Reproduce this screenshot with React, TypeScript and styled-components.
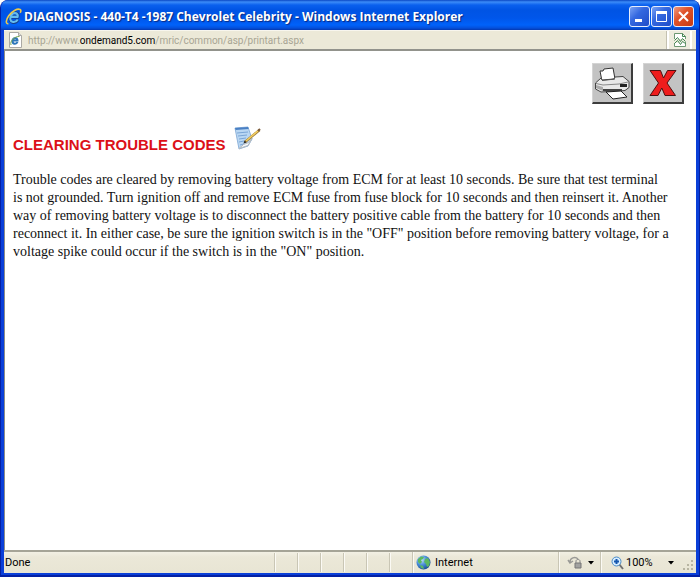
import React from "react";
import styled, { createGlobalStyle, css } from "styled-components";

const Global = createGlobalStyle`
  * { box-sizing: border-box; }
  body { margin: 0; background: #fff; }
  button { font: inherit; padding: 0; cursor: pointer; }
`;

const Window = styled.div`
  min-height: 100vh;
  display: flex;
  flex-direction: column;
  background: #0a3fd8;
  border: solid #0420a4;
  border-width: 0 1px 2px;
  border-radius: 8px 8px 0 0;
  overflow: hidden;
`;

const TitleBar = styled.header`
  height: 30px;
  display: flex;
  align-items: center;
  gap: 2px;
  padding: 3px 5px 0 4px;
  background: linear-gradient(
    #0a47c4 0,
    #3c8cf8 2px,
    #0a60ee 5px,
    #0054e4 10px,
    #0056ea 18px,
    #0062fa 25px,
    #0450dc 28px,
    #0438b0 30px
  );
`;

const Title = styled.h1`
  flex: 1;
  margin: 0;
  font: 700 12px/20px "Open Sans", sans-serif;
  color: #fff;
  text-shadow: 1px 1px 1px #0a2a80;
  white-space: nowrap;
`;

const Controls = styled.div`
  display: flex;
  gap: 1px;
`;

const ControlButton = styled.button<{ $close?: boolean }>`
  width: 21px;
  height: 21px;
  border: 1px solid #e6edfc;
  border-radius: 3px;
  display: grid;
  place-items: center;
  background: ${(p) =>
    p.$close
      ? "linear-gradient(135deg, #ee9a80, #e0532b 40%, #c63a12)"
      : "linear-gradient(135deg, #7aa2f4, #3468e0 40%, #1f4cc8)"};
`;

const Frame = styled.div`
  flex: 1;
  display: flex;
  flex-direction: column;
  margin: 0 3px 2px;
  background: #ece9d8;
`;

const AddressBar = styled.div`
  height: 21px;
  display: flex;
  align-items: stretch;
  padding-right: 4px;
  border-top: 1px solid #f8f6ee;
  border-bottom: 2px solid #92938c;
`;

const PageIcon = styled.span`
  display: grid;
  place-items: center;
  width: 22px;
`;

const Url = styled.p`
  flex: 1;
  margin: 0;
  padding-left: 2px;
  font: 400 10px/20px Roboto, sans-serif;
  color: #a8a594;
  white-space: nowrap;
`;

const Domain = styled.span`
  color: #000;
`;

const BrokenPageButton = styled.button`
  width: 25px;
  border: solid #fff;
  border-width: 0 2px;
  box-shadow: -1px 0 #c4c1b0;
  background: #eeecdf;
  display: grid;
  place-items: center;
`;

const Page = styled.main`
  flex: 1;
  padding: 12px 9px 16px 8px;
  background: #fff;
  border-left: 1px solid #8c8d88;
`;

const Tools = styled.div`
  display: flex;
  justify-content: flex-end;
  gap: 10px;
  padding-right: 3px;
`;

const ToolButton = styled.button`
  width: 41px;
  height: 41px;
  display: grid;
  place-items: center;
  background: #c3c3c3;
  border: solid;
  border-width: 1px 2px 2px 1px;
  border-color: #d4d4d4 #3c3c3c #3c3c3c #d4d4d4;
`;

const Heading = styled.h2`
  display: flex;
  align-items: flex-end;
  gap: 8px;
  margin: 22px 0 18px;
  font: 700 15px/16px "Liberation Sans", Arial, sans-serif;
  color: #dc1018;
`;

const NoteButton = styled.button`
  border: 0;
  background: none;
  height: 27px;
  display: flex;
`;

const Article = styled.p`
  margin: 0;
  font: 400 14px/18px "Liberation Serif", "Times New Roman", serif;
  color: #111;
`;

const StatusBar = styled.footer`
  height: 23px;
  display: flex;
  align-items: stretch;
  border-top: 2px solid #a5a497;
  background: linear-gradient(#f2f0e4, #ebe8d8 5px, #e8e5d4);
  font: 400 11px/22px Roboto, sans-serif;
  color: #000;
`;

const etched = css`
  border-left: 1px solid #c9c6b5;
  box-shadow: inset 1px 0 #fbfaf4;
`;

const StatusText = styled.span`
  flex: 1;
  padding-left: 1px;
`;

const Slot = styled.span`
  width: 23px;
  margin: 1px 0;
  ${etched}
`;

const Zone = styled.span`
  width: 146px;
  display: flex;
  align-items: center;
  gap: 4px;
  padding-left: 3px;
  ${etched}
`;

const StatusButton = styled.button<{ $wide?: boolean }>`
  width: ${(p) => (p.$wide ? 83 : 42)}px;
  display: flex;
  align-items: center;
  gap: ${(p) => (p.$wide ? 2 : 5)}px;
  padding-left: ${(p) => (p.$wide ? 10 : 8)}px;
  border: 0;
  background: none;
  color: #000;
  ${etched}
`;

const ZoomValue = styled.span`
  width: 40px;
  text-align: left;
`;

const Grip = styled.span`
  width: 13px;
  display: flex;
  align-items: flex-end;
  padding-bottom: 2px;
`;

function IeLogo({ size }: { size: number }) {
  return (
    <svg width={size} height={size} viewBox="0 0 16 16" aria-hidden="true">
      <path d="M12.2 11C11 13 9 13.900 7 13.400 4.300 12.500 4.200 9.500 5.400 7.100 6.600 4.800 9.500 3.800 11.200 5c1.300 1 1.300 2.300.8 3.600H6" fill="none" stroke="#173f88" strokeWidth="3" />
      <path d="M12 10.800C11 12.500 9 13.500 7 13 4.600 12.200 4.500 9.500 5.600 7.300 6.700 5.100 9.300 4.200 11 5.200c1.200.9 1.200 2 .8 3.200H6" fill="none" stroke="#65bdf0" strokeWidth="2" />
      <path d="M3.200 14.800C.2 15 1 11 3.500 7.300 6.400 3 11.700.2 14.200 1.400c1.100.6.8 2 .1 3.100" fill="none" stroke="#edc94c" strokeWidth="1.500" />
    </svg>
  );
}

function PrinterIcon() {
  return (
    <svg width="38" height="38" viewBox="0 0 38 38" aria-hidden="true">
      <path d="M9 17 7 7h3l1-2 9-1 2 11z" fill="#fff" stroke="#333" />
      <path d="M2.500 19 8 14l1 2 12-1 1-2 8-.5 6 5v6l-4 3-6 .5-18 1-5.500-3z" fill="#e9e9e9" stroke="#444" />
      <path d="M3 19.500 10 21l16-1 9-2" fill="none" stroke="#888" />
      <path d="M9 16.500 22 15" stroke="#555" />
      <path d="m3 21 7 2v4l-7-3z" fill="#aaa" />
      <path d="M27 20h7v3h-7z" fill="#222" />
      <path d="M10 25h19v2H10z" fill="#444" />
      <path d="m13 28 15-1 6 6-14 2z" fill="#fff" stroke="#222" />
    </svg>
  );
}

function NoteIcon() {
  return (
    <svg width="28" height="24" viewBox="0 0 28 24" aria-hidden="true">
      <path d="M1 2 14 1l4 12-4 7-9 3z" fill="#b9d7f3" stroke="#8fb3da" />
      <path d="m1 2 13-1 .6 2L1.600 4z" fill="#4a80c4" />
      <path d="m3 7 11-1M4 10l9-1M5 13l7-1M5 16l5-1M6 19l4-1" stroke="#7ba6d6" />
      <path d="m5 22.500 9-3 4-7-3.500 4-5 2z" fill="#f4f9fe" stroke="#b4b9bd" />
      <path d="m11 16 14.500-12" stroke="#9c7a35" strokeWidth="2.500" />
      <path d="m12 15 12.500-10.500" stroke="#f3cf62" strokeWidth="1.500" />
      <path d="m24 5 2-2" stroke="#7b5b3c" strokeWidth="2" />
      <path d="m9.500 17.500 1-3 2 2z" fill="#2c2c2c" />
    </svg>
  );
}

function Globe() {
  return (
    <svg width="15" height="15" viewBox="0 0 15 15" aria-hidden="true">
      <defs>
        <radialGradient id="sea" cx=".35" cy=".3" r=".75">
          <stop offset="0" stopColor="#c5e3fc" />
          <stop offset=".5" stopColor="#4a8fd8" />
          <stop offset="1" stopColor="#174a95" />
        </radialGradient>
      </defs>
      <circle cx="7.5" cy="7.5" r="7" fill="url(#sea)" />
      <path d="M2 4 5 1.500l3 .5-1 2-2 1 1 2-2 2-2-2zM9 4l3-1 2 4-1 4-2 1-1-3-2-2zM4 10l3 1 1 3-3-1z" fill="#5cb860" />
    </svg>
  );
}

function Caret() {
  return (
    <svg width="6" height="4" viewBox="0 0 6 4" aria-hidden="true">
      <path d="M0 0h6L3 3.500z" fill="#000" />
    </svg>
  );
}

export default function App() {
  return (
    <>
      <Global />
      <Window>
        <TitleBar>
          <IeLogo size={17} />
          <Title>DIAGNOSIS - 440-T4 -1987 Chevrolet Celebrity - Windows Internet Explorer</Title>
          <Controls>
            <ControlButton aria-label="Minimize">
              <svg width="15" height="15"><path d="M3 10h7v3H3z" fill="#fff" /></svg>
            </ControlButton>
            <ControlButton aria-label="Maximize">
              <svg width="15" height="15"><path d="M2.500 3.500h10v9h-10z" fill="none" stroke="#fff" /><path d="M2 2h11v3H2z" fill="#fff" /></svg>
            </ControlButton>
            <ControlButton $close aria-label="Close">
              <svg width="15" height="15"><path d="m3 3 9 9M12 3l-9 9" stroke="#fff" strokeWidth="2" /></svg>
            </ControlButton>
          </Controls>
        </TitleBar>
        <Frame>
          <AddressBar>
            <PageIcon>
              <svg width="15" height="16" viewBox="0 0 15 16" aria-hidden="true">
                <path d="M1.500.5h9l3 3v12h-12z" fill="#fff" stroke="#aaa9a4" />
                <path d="M10.500.5v3h3" fill="#ddd" stroke="#aaa9a4" />
                <path d="M9.500 10c-1 2.500-5 2.500-5-1s5-4 5-.5h-5" fill="none" stroke="#2c76b9" strokeWidth="2" />
                <path d="M3 13C1.500 9 7 4 11.500 4.500" fill="none" stroke="#79a850" />
              </svg>
            </PageIcon>
            <Url>
              http://www.<Domain>ondemand5.com</Domain>/mric/common/asp/printart.aspx
            </Url>
            <BrokenPageButton aria-label="Compatibility View">
              <svg width="12" height="14" viewBox="0 0 12 14" aria-hidden="true">
                <path d="M.5 6V.5h8l3 3V6M.5 10v3.500h11V9" fill="#fff" stroke="#6d9873" />
                <path d="M8.500.5v3h3M.5 7.500l3-3 3 4 2-3 3 3M.5 10.500l3-3 3 4 2-3 3 2" fill="none" stroke="#3f8550" />
              </svg>
            </BrokenPageButton>
          </AddressBar>
          <Page>
            <Tools>
              <ToolButton aria-label="Print">
                <PrinterIcon />
              </ToolButton>
              <ToolButton aria-label="Close article">
                <svg width="28" height="28" viewBox="0 0 28 28" aria-hidden="true">
                  <path d="M1 1.500h10.500L14.500 9l4-7.500H27L18 14l8.500 12.500H16L12.800 19 9 26.500H1L9.500 14z" fill="#ee1c1c" stroke="#4c1010" />
                </svg>
              </ToolButton>
            </Tools>
            <Heading>
              CLEARING TROUBLE CODES
              <NoteButton aria-label="Add note">
                <NoteIcon />
              </NoteButton>
            </Heading>
            <Article>
              Trouble codes are cleared by removing battery voltage from ECM for at least 10 seconds. Be sure that test terminal
              <br />
              is not grounded. Turn ignition off and remove ECM fuse from fuse block for 10 seconds and then reinsert it. Another
              <br />
              way of removing battery voltage is to disconnect the battery positive cable from the battery for 10 seconds and then
              <br />
              reconnect it. In either case, be sure the ignition switch is in the "OFF" position before removing battery voltage, for a
              <br />
              voltage spike could occur if the switch is in the "ON" position.
            </Article>
          </Page>
          <StatusBar>
            <StatusText>Done</StatusText>
            <Slot />
            <Slot />
            <Slot />
            <Slot />
            <Slot />
            <Slot />
            <Zone>
              <Globe />
              Internet
            </Zone>
            <StatusButton aria-label="Protected mode">
              <svg width="16" height="15" viewBox="0 0 16 15" aria-hidden="true">
                <path d="M3 7c0-4 5-6 8-3M1 5l2 3 3-2" fill="none" stroke="#9a9a96" strokeWidth="1.500" />
                <path d="M8 8h6v5H8z" fill="#a2a2a0" stroke="#777" />
                <path d="M9 8V6c0-2 4-2 4 0v2" fill="none" stroke="#888" />
              </svg>
              <Caret />
            </StatusButton>
            <StatusButton $wide aria-label="Zoom level 100%">
              <svg width="13" height="14" viewBox="0 0 13 14" aria-hidden="true">
                <path d="m8 8 4 5" stroke="#707070" strokeWidth="2" />
                <circle cx="5.5" cy="5.5" r="4.5" fill="#d6edff" stroke="#4b8bc6" />
                <path d="M3 5.500h5M5.500 3v5" stroke="#1557ae" strokeWidth="2" />
              </svg>
              <ZoomValue>100%</ZoomValue>
              <Caret />
            </StatusButton>
            <Grip>
              <svg width="11" height="11" viewBox="0 0 11 11" aria-hidden="true">
                <path d="M8 0h2v2H8zM4 4h2v2H4zM8 4h2v2H8zM0 8h2v2H0zM4 8h2v2H4zM8 8h2v2H8z" fill="#b8b5a2" />
              </svg>
            </Grip>
          </StatusBar>
        </Frame>
      </Window>
    </>
  );
}
